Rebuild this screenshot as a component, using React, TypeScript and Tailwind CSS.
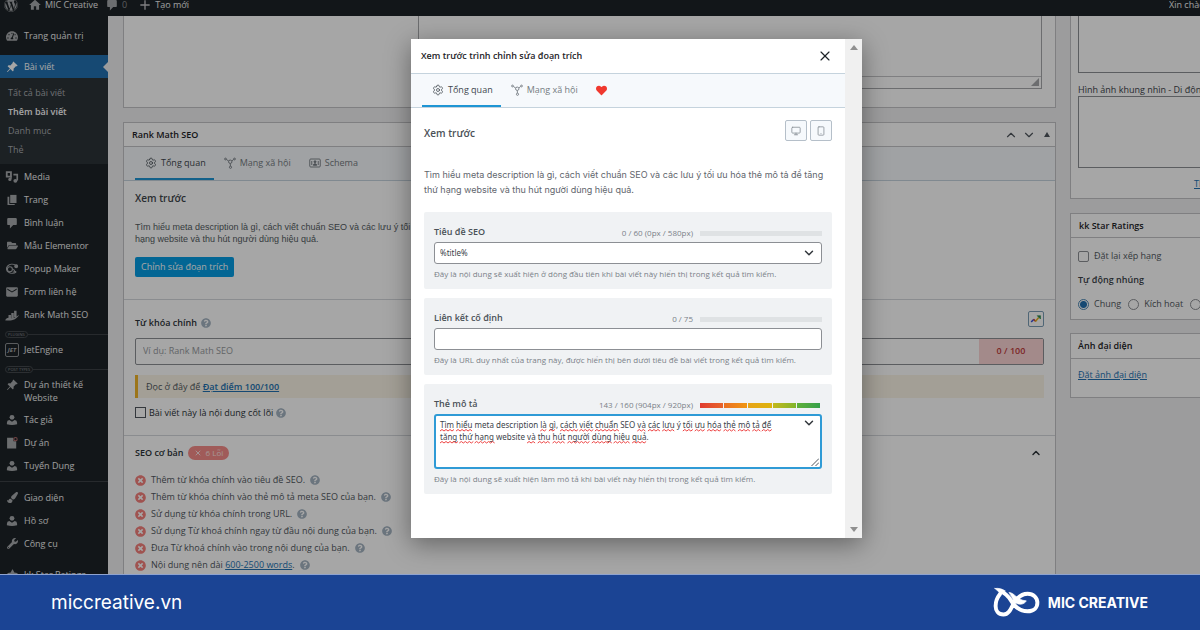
import React, { useMemo, useState } from "react";
import { ChevronDown, ChevronUp, Monitor, Settings, Smartphone, X } from "lucide-react";
import {
  FaFolderOpen,
  FaHeart,
  FaPaintBrush,
  FaQuestionCircle,
  FaStar,
  FaTachometerAlt,
  FaTimesCircle,
  FaWordpress,
  FaWrench,
} from "react-icons/fa";
import { BsPinAngleFill } from "react-icons/bs";
import { MdAdd, MdEmail, MdHome } from "react-icons/md";

type IconProps = { className?: string };

function MediaIcon({ className }: IconProps) {
  return (
    <svg viewBox="0 0 20 20" fill="none" stroke="currentColor" className={className} aria-hidden="true">
      <path d="M2.500 3h6v6.500h-6z" strokeWidth="2.600" />
      <path d="M8.500 9v4" strokeWidth="2" />
      <circle cx="7" cy="13.500" r="2.300" fill="currentColor" stroke="none" />
      <path d="M12 6.500h5.500V15" strokeWidth="2.400" />
      <circle cx="14.800" cy="15.500" r="2.800" fill="currentColor" stroke="none" />
    </svg>
  );
}

function PagesIcon({ className }: IconProps) {
  return (
    <svg viewBox="0 0 20 20" fill="currentColor" className={className} aria-hidden="true">
      <path d="M7 1.500h10.500V15H7z" />
      <path d="M2.500 4.500h3v12h9v2h-12z" />
    </svg>
  );
}

function CommentIcon({ className }: IconProps) {
  return (
    <svg viewBox="0 0 20 20" fill="currentColor" className={className} aria-hidden="true">
      <path d="M4 1.500h12q2 0 2 2v8q0 2-2 2h-4L6.500 19v-5.500H4q-2 0-2-2v-8q0-2 2-2z" />
    </svg>
  );
}

function PersonIcon({ className }: IconProps) {
  return (
    <svg viewBox="0 0 20 20" fill="currentColor" className={className} aria-hidden="true">
      <circle cx="10" cy="5.500" r="4" />
      <path d="M1.500 17v-2.500q0-4 4-4.500l4.500 3 4.500-3q4 .5 4 4.500V17q-8.500 2.500-17 0z" />
    </svg>
  );
}

function PopupIcon({ className }: IconProps) {
  return (
    <svg viewBox="0 0 20 20" fill="none" stroke="currentColor" strokeWidth="1.500" className={className} aria-hidden="true">
      <path d="M16 14a8 6.500 0 1 1-1-9.500" />
      <circle cx="7" cy="10.500" r="3.600" />
      <circle cx="16" cy="6" r="2" fill="currentColor" />
      <path d="M12 10l3 5M11 14.500l5-1" />
    </svg>
  );
}

function RankMathIcon({ className }: IconProps) {
  return (
    <svg viewBox="0 0 20 20" fill="currentColor" className={className} aria-hidden="true">
      <path d="M5 10h3.500v6H5zM9 7h3.500v8H9zM13 4h3.500v9H13z" />
      <path d="M0 17.500c2-3 4-4 6-3.500 5 1.500 9-.5 14-4.500-3 7-11 9.500-20 8z" />
    </svg>
  );
}

function ProjectIcon({ className }: IconProps) {
  return (
    <svg viewBox="0 0 20 20" className={className} aria-hidden="true">
      <path fill="currentColor" d="M3 2.500h9v5h4V18H3z" />
      <circle cx="15" cy="4.500" r="2.400" fill="none" stroke="#b0686a" strokeWidth="1.500" />
    </svg>
  );
}

function SocialIcon({ className }: IconProps) {
  return (
    <svg viewBox="0 0 24 24" fill="none" stroke="currentColor" strokeWidth="1.800" className={className} aria-hidden="true">
      <circle cx="3" cy="4" r="1.800" />
      <circle cx="21" cy="4" r="1.800" />
      <circle cx="12.500" cy="9.500" r="3.400" />
      <circle cx="13" cy="20.500" r="2.200" />
      <path d="M4.800 5l4.600 3M15.500 8l3.700-3M12.700 13v5.200" />
    </svg>
  );
}

function SchemaIcon({ className }: IconProps) {
  return (
    <svg viewBox="0 0 24 20" fill="none" stroke="currentColor" strokeWidth="1.800" className={className} aria-hidden="true">
      <rect x="1.500" y="2" width="21" height="16" rx="2" />
      <path d="M5.500 6v8M18.500 6v8" />
      <circle cx="12" cy="7.500" r="2" fill="currentColor" />
      <path d="M8.500 14.500c0-4 7-4 7 0z" fill="currentColor" />
    </svg>
  );
}

function TrendIcon({ className }: IconProps) {
  return (
    <svg viewBox="0 0 20 20" fill="none" strokeWidth="2.600" className={className} aria-hidden="true">
      <path d="M2 15l4.500-4.500" stroke="#3b4fd8" />
      <path d="M6 10.500l3.500 3.500" stroke="#d9453c" />
      <path d="M9 14l5.500-6.500" stroke="#e6b422" />
      <path d="M12 4.500h5.500V10z" fill="#2b8a4b" stroke="#2b8a4b" strokeWidth="1" />
    </svg>
  );
}

function BrandMark() {
  return (
    <svg viewBox="100 80 144 94" className="h-[31px] w-[47px]" fill="none" stroke="#fff" strokeLinecap="round" strokeLinejoin="round" aria-hidden="true">
      <path
        strokeWidth="12"
        d="M124 94C138 98 148 110 156 122C168 142 184 154 206 154C226 154 236 142 236 128C236 112 224 100 206 100C186 100 174 112 164 128C154 148 148 164 132 164C116 164 108 152 108 138C108 122 113 112 121 102"
      />
      <path strokeWidth="2" fill="#fff" d="M106 84C118 82 130 86 138 92L122 100C118 96 114 90 106 84z" />
      <path strokeWidth="2" fill="#fff" d="M150 96C168 98 172 120 202 122C196 134 178 136 166 126z" />
    </svg>
  );
}

function Help() {
  return <FaQuestionCircle className="size-2.5 shrink-0 text-[#a5b4c2]" aria-label="Trợ giúp" />;
}

type MenuItem = { label: string; icon: React.ReactNode };

const contentMenu: MenuItem[] = [
  { label: "Media", icon: <MediaIcon className="size-3.5" /> },
  { label: "Trang", icon: <PagesIcon className="size-3" /> },
  { label: "Bình luận", icon: <CommentIcon className="size-3" /> },
  { label: "Mẫu Elementor", icon: <FaFolderOpen className="size-[11px]" /> },
  { label: "Popup Maker", icon: <PopupIcon className="size-3.5" /> },
  { label: "Form liên hệ", icon: <MdEmail className="size-3.5" /> },
  { label: "Rank Math SEO", icon: <RankMathIcon className="size-3.5" /> },
];

const jetMenu: MenuItem[] = [
  {
    label: "JetEngine",
    icon: (
      <span className="grid size-3.5 place-items-center rounded-xs border border-[#8b8e91]">
        <span className="text-[6px] leading-none font-bold italic">JET</span>
      </span>
    ),
  },
];

const postTypeMenu: MenuItem[] = [
  { label: "Tác giả", icon: <PersonIcon className="size-3" /> },
  { label: "Dự án", icon: <ProjectIcon className="size-3.5" /> },
  { label: "Tuyển Dụng", icon: <PersonIcon className="size-3" /> },
];

const toolsMenu: MenuItem[] = [
  { label: "Giao diện", icon: <FaPaintBrush className="size-[11px]" /> },
  { label: "Hồ sơ", icon: <PersonIcon className="size-3" /> },
  { label: "Công cụ", icon: <FaWrench className="size-[11px]" /> },
];

function MenuLink({ item }: { item: MenuItem }) {
  return (
    <a href="#" className="flex min-h-[23px] items-center gap-[5px] pl-[5px] text-[#f0f0f1]">
      <span className="grid w-3.5 shrink-0 place-items-center text-[#a7aaad]">{item.icon}</span>
      <span className="leading-[13px]">{item.label}</span>
    </a>
  );
}

function MenuSeparator({ label }: { label: string }) {
  return (
    <div className="flex h-3 items-center pt-1 pl-[5px]">
      <span className="rounded-full border border-[#44494d] px-0.5 text-[4px] leading-[5px] text-[#8a9096] uppercase">{label}</span>
      <span className="h-px flex-1 bg-[#3c4146]" />
    </div>
  );
}

function Sidebar() {
  return (
    <nav aria-label="Menu quản trị" className="w-[108px] shrink-0 overflow-hidden bg-[#1d2327] pt-2 text-[9px]">
      <MenuLink item={{ label: "Trang quản trị", icon: <FaTachometerAlt className="size-3" /> }} />
      <a href="#" className="mt-2 flex h-[23px] items-center gap-[5px] bg-[#2271b1] pl-[5px] text-white">
        <span className="grid w-3.5 shrink-0 place-items-center">
          <BsPinAngleFill className="size-3" />
        </span>
        <span className="flex-1">Bài viết</span>
        <svg viewBox="0 0 5 10" className="h-2.5 w-[5px]" aria-hidden="true">
          <path d="M5 0L0 5l5 5z" fill="#f0f0f1" />
        </svg>
      </a>
      <ul className="mb-px bg-[#2c3338] py-[5px] pl-2 leading-[19px] text-[#a9acb0]">
        <li><a href="#">Tất cả bài viết</a></li>
        <li><a href="#" className="font-semibold text-white">Thêm bài viết</a></li>
        <li><a href="#">Danh mục</a></li>
        <li><a href="#">Thẻ</a></li>
      </ul>
      {contentMenu.map((m) => <MenuLink key={m.label} item={m} />)}
      <MenuSeparator label="Plugins" />
      {jetMenu.map((m) => <MenuLink key={m.label} item={m} />)}
      <MenuSeparator label="Post types" />
      <div className="pt-[5px] pb-1">
        <MenuLink item={{ label: "Dự án thiết kế Website", icon: <BsPinAngleFill className="mb-3 size-3" /> }} />
      </div>
      {postTypeMenu.map((m) => <MenuLink key={m.label} item={m} />)}
      <div className="my-1 h-px bg-[#3c4146]" />
      {toolsMenu.map((m) => <MenuLink key={m.label} item={m} />)}
      <div className="pt-2">
        <MenuLink item={{ label: "kk Star Ratings", icon: <FaStar className="size-[11px]" /> }} />
      </div>
    </nav>
  );
}

function AdminBar() {
  return (
    <header className="flex h-4 shrink-0 items-center bg-[#1d2327] pb-1.5 text-[9px] leading-[10px] whitespace-nowrap text-[#f0f0f1]">
      <FaWordpress className="ml-1 size-3.5 shrink-0 text-[#a7aaad]" />
      <MdHome className="ml-2.5 size-3.5 shrink-0 text-[#a7aaad]" />
      <a href="#" className="ml-[3px] shrink-0">MIC Creative</a>
      <CommentIcon className="ml-2 size-3 shrink-0 text-[#a7aaad]" />
      <span className="ml-1 text-[#8b8e91]">0</span>
      <MdAdd className="ml-2.5 size-4 shrink-0 text-[#c3c4c7]" />
      <a href="#" className="ml-0.5 shrink-0">Tạo mới</a>
      <span className="ml-auto w-[31px] overflow-hidden">Xin chào, admin</span>
    </header>
  );
}

type Tab = { label: string; icon: React.ReactNode };

function TabBar({ tabs, trailing }: { tabs: Tab[]; trailing?: React.ReactNode }) {
  return (
    <div role="tablist" className="flex h-[34px] items-stretch border-b border-[#c5d3dd] bg-[#f6f9fc] pl-[11px] text-[9px]">
      {tabs.map((t, i) => (
        <button
          key={t.label}
          type="button"
          role="tab"
          aria-selected={i === 0}
          className={
            i === 0
              ? "flex items-center gap-1 border-b-2 border-[#1e95d4] pt-px pr-2 pl-2.5 text-[#3f474d]"
              : "flex items-center gap-1 border-b-2 border-transparent pt-px pr-2 pl-2.5 text-[#757c82]"
          }
        >
          {t.icon}
          {t.label}
        </button>
      ))}
      {trailing}
    </div>
  );
}

const generalTab: Tab = { label: "Tổng quan", icon: <Settings className="size-3" strokeWidth={1.5} /> };
const socialTab: Tab = { label: "Mạng xã hội", icon: <SocialIcon className="size-3" /> };
const schemaTab: Tab = { label: "Schema", icon: <SchemaIcon className="h-2.5 w-3" /> };

const seoErrors: React.ReactNode[] = [
  "Thêm từ khóa chính vào tiêu đề SEO.",
  "Thêm từ khóa chính vào thẻ mô tả meta SEO của bạn.",
  "Sử dụng từ khóa chính trong URL.",
  "Sử dụng Từ khoá chính ngay từ đầu nội dung của bạn.",
  "Đưa Từ khoá chính vào trong nội dung của bạn.",
  <>Nội dung nên dài <a href="#" className="text-[#2271b1] underline">600-2500 words</a>.</>,
];

function ExcerptPanel() {
  return (
    <section className="flex h-[92px] shrink-0 justify-end border border-t-0 border-[#c3c4c7] bg-white pr-[13px]">
      <div className="flex h-[73px] w-[68%] flex-col border border-t-0 border-[#a6a8ab]">
        <div className="flex-1" />
        <div className="flex h-3 items-end justify-end border-t border-[#c3c4c7] p-0.5">
          <svg viewBox="0 0 8 8" className="size-2" aria-hidden="true">
            <path d="M8 0v8H0z" fill="#a6a8ab" />
          </svg>
        </div>
      </div>
    </section>
  );
}

function RankMathPanel() {
  return (
    <section className="border border-[#c3c4c7] bg-white text-[9px] text-[#50575e]">
      <div className="flex h-6 items-center gap-1 border-b border-[#c3c4c7] pr-[5px] pl-2">
        <h2 className="flex-1 text-[9px] font-semibold text-[#1d2327]">Rank Math SEO</h2>
        <button type="button" aria-label="Di chuyển lên"><ChevronUp className="size-3.5 text-[#50575e]" /></button>
        <button type="button" aria-label="Di chuyển xuống"><ChevronDown className="size-3.5 text-[#50575e]" /></button>
        <button type="button" aria-label="Thu gọn" className="pl-1">
          <svg viewBox="0 0 6 5" className="h-[5px] w-1.5" aria-hidden="true"><path d="M3 0l3 5H0z" fill="#50575e" /></svg>
        </button>
      </div>
      <TabBar tabs={[generalTab, socialTab, schemaTab]} />
      <div className="border-b border-[#d5d8dc] px-[11px] pt-2.5 pb-[22px]">
        <h3 className="text-[10px] leading-[14px] font-semibold text-[#3f474d]">Xem trước</h3>
        <p className="mt-4 font-['Liberation_Sans',sans-serif] text-[9px] leading-3 text-[#545b61]">
          Tìm hiểu meta description là gì, cách viết chuẩn SEO và các lưu ý tối ưu hóa thẻ mô tả để tăng thứ<br />
          hạng website và thu hút người dùng hiệu quả.
        </p>
        <button type="button" className="mt-3 block h-5 rounded-xs bg-[#069de3] px-1.5 text-white">Chỉnh sửa đoạn trích</button>
      </div>
      <div className="border-b border-[#d5d8dc] px-[11px] pt-2 pb-4">
        <div className="flex items-center justify-between">
          <label htmlFor="focus-keyword" className="flex items-center gap-1 pt-2 font-semibold text-[#2c3338]">
            Từ khóa chính <Help />
          </label>
          <button type="button" aria-label="Xu hướng" className="grid size-4 place-items-center rounded-xs border border-[#7c9db5]">
            <TrendIcon className="size-3" />
          </button>
        </div>
        <div className="mt-2 flex h-[27px] overflow-hidden rounded-xs border border-[#8c8f94]">
          <input id="focus-keyword" placeholder="Ví dụ: Rank Math SEO" className="min-w-0 flex-1 px-[7px] text-[9px] placeholder:text-[#969a9e]" />
          <span className="grid w-16 place-items-center bg-[#fbd5d5] font-semibold text-[#c03a3a]">0 / 100</span>
        </div>
        <p className="mt-2.5 h-[23px] border-l-[3px] border-[#f0b429] bg-[#fbf5e6] pl-2 leading-[23px]">
          Đọc ở đây để <a href="#" className="font-semibold text-[#2271b1] underline">Đạt điểm 100/100</a>
        </p>
        <label className="mt-[9px] flex items-center gap-[3px] leading-3 font-medium text-[#2c3338]">
          <input type="checkbox" className="size-[11px] appearance-none border border-[#50575e] bg-white" />
          Bài viết này là nội dung cốt lõi <Help />
        </label>
      </div>
      <div className="px-[11px] pt-2.5">
        <div className="flex items-center gap-1">
          <h3 className="font-semibold text-[#2c3338]">SEO cơ bản</h3>
          <span className="flex h-3.5 items-center gap-1 rounded-full bg-[#f68d89] px-1.5 text-[8px] text-[#fde3e3]">
            <X className="size-2" strokeWidth={3} /> 6 Lỗi
          </span>
          <button type="button" aria-label="Thu gọn SEO cơ bản" className="ml-auto pr-0.5"><ChevronUp className="size-3 text-[#2c3338]" strokeWidth={3} /></button>
        </div>
        <ul className="mt-3">
          {seoErrors.map((e, i) => (
            <li key={i} className="flex h-[17px] items-center gap-[5px]">
              <FaTimesCircle className="size-[11px] shrink-0 text-[#f5807c]" />
              <span>{e}</span>
              <Help />
            </li>
          ))}
        </ul>
      </div>
    </section>
  );
}

function SideColumn() {
  return (
    <aside className="w-[130px] shrink-0 overflow-hidden text-[9px] text-[#50575e]">
      <div className="w-[190px]">
        <section className="h-[183px] border border-t-0 border-[#c3c4c7] bg-white pl-[7px]">
          <textarea aria-label="Hình ảnh khung nhìn" className="block h-[57px] w-[170px] resize-none border border-t-0 border-[#8c8f94]" />
          <label htmlFor="mobile-viewport" className="mt-2.5 block leading-[13px] text-[#3c434a]">Hình ảnh khung nhìn - Di động</label>
          <textarea id="mobile-viewport" className="block h-[72px] w-[170px] resize-none border border-[#8c8f94]" />
          <a href="#" className="mt-2.5 ml-[116px] block leading-3 text-[#2271b1] underline">Thêm</a>
        </section>
        <section className="mt-3.5 h-[107px] border border-[#c3c4c7] bg-white">
          <h2 className="flex h-6 items-center border-b border-[#c3c4c7] pl-2 text-[9px] font-semibold text-[#1d2327]">kk Star Ratings</h2>
          <div className="flex flex-col gap-3 pt-3 pl-[7px] leading-3">
            <label className="flex items-center gap-[5px]">
              <input type="checkbox" className="size-[11px] appearance-none rounded-xs border border-[#8c8f94] bg-white" />
              Đặt lại xếp hạng
            </label>
            <h3 className="font-semibold text-[#3c434a]">Tự động nhúng</h3>
            <div className="flex items-center gap-[7px]">
              <label className="flex items-center gap-[5px]">
                <input type="radio" name="embed" defaultChecked className="size-[11px] appearance-none rounded-full border border-[#4d88b5] bg-[radial-gradient(circle,#2271b1_0_3px,white_4px)]" />
                Chung
              </label>
              <label className="flex items-center gap-[5px]">
                <input type="radio" name="embed" className="size-[11px] appearance-none rounded-full border border-[#8c8f94] bg-white" />
                Kích hoạt
              </label>
              <label className="flex items-center gap-[5px]">
                <input type="radio" name="embed" className="size-[11px] appearance-none rounded-full border border-[#8c8f94] bg-white" />
                Tắt
              </label>
            </div>
          </div>
        </section>
        <section className="mt-[13px] h-[65px] border border-[#c3c4c7] bg-white">
          <h2 className="flex h-[25px] items-center border-b border-[#c3c4c7] pl-[7px] text-[9px] font-semibold text-[#1d2327]">Ảnh đại diện</h2>
          <a href="#" className="mt-2.5 ml-[7px] inline-block leading-3 text-[#2271b1] underline">Đặt ảnh đại diện</a>
        </section>
      </div>
    </aside>
  );
}

function LengthMeter({ text, children }: { text: string; children?: React.ReactNode }) {
  return (
    <div className="flex items-center gap-[7px] pt-0.5">
      <span className="text-[8px] leading-[10px] text-[#7a8188]">{text}</span>
      {children ? (
        <span className="flex h-[5px] w-[122px] gap-px pr-0.5">{children}</span>
      ) : (
        <span className="h-[5px] w-[122px] bg-[#dfe2e4]" />
      )}
    </div>
  );
}

type FieldProps = { id: string; label: string; count: string; meter?: React.ReactNode; help: string; children: React.ReactNode };

function Field({ id, label, count, meter, help, children }: FieldProps) {
  return (
    <div className="rounded-xs bg-[#f0f2f4] px-2.5 pt-3.5 pb-[9px]">
      <div className="mb-1 flex h-3 items-center justify-between">
        <label htmlFor={id} className="text-[9px] font-semibold text-[#4a5157]">{label}</label>
        <LengthMeter text={count}>{meter}</LengthMeter>
      </div>
      {children}
      <p className="mt-1 text-[8px] leading-3 text-[#7a8188]">{help}</p>
    </div>
  );
}

const descriptionLines = [
  "Tìm hiểu meta description là gì, cách viết chuẩn SEO và các lưu ý tối ưu hóa thẻ mô tả để",
  "tăng thứ hạng website và thu hút người dùng hiệu quả.",
];
const knownWords = new Set(["meta", "description", "SEO", "ý", "website"]);

function SpellingMarks() {
  const marks = useMemo(() => {
    const ctx = document.createElement("canvas").getContext("2d");
    if (!ctx) return [];
    ctx.font = '8px "Noto Sans"';
    return descriptionLines.flatMap((line, row) => {
      const found: { d: string; key: string }[] = [];
      let offset = 0;
      for (const token of line.split(" ")) {
        const word = token.replace(/[.,]/g, "");
        if (!knownWords.has(word)) {
          const start = ctx.measureText(line.slice(0, offset)).width;
          const width = ctx.measureText(word).width;
          const y = 12 + row * 12;
          let d = `M${start} ${y}`;
          for (let x = 0, up = true; x + 2 <= width + 1; x += 2, up = !up) d += `l2 ${up ? -1.5 : 1.5}`;
          found.push({ d, key: `${row}-${offset}` });
        }
        offset += token.length + 1;
      }
      return found;
    });
  }, []);
  return (
    <svg className="pointer-events-none absolute top-[3px] left-1 h-7 w-[360px]" fill="none" stroke="#ee4444" strokeWidth="1" aria-hidden="true">
      {marks.map((m) => <path key={m.key} d={m.d} />)}
    </svg>
  );
}

function SnippetDialog() {
  const [description, setDescription] = useState(descriptionLines.join(" "));
  return (
    <div role="dialog" aria-label="Xem trước trình chỉnh sửa đoạn trích" className="flex w-[451px] shadow-[0_6px_24px_rgba(0,0,0,0.4)]">
      <div className="min-w-0 flex-1 bg-white">
        <div className="flex h-[35px] items-center justify-between border-b border-[#c5d3dd] pr-3 pl-2.5">
          <h1 className="text-[9px] font-semibold text-[#1d2327]">Xem trước trình chỉnh sửa đoạn trích</h1>
          <button type="button" aria-label="Đóng"><X className="size-4 text-[#1d2327]" strokeWidth={1.75} /></button>
        </div>
        <TabBar
          tabs={[generalTab, socialTab]}
          trailing={
            <button type="button" role="tab" aria-selected="false" aria-label="Yêu thích" className="px-2.5">
              <FaHeart className="size-[11px] text-[#f0382e]" />
            </button>
          }
        />
        <div className="px-[13px] pt-3 pb-11">
          <div className="flex h-[21px] items-center justify-between">
            <h2 className="pt-1.5 text-[10px] font-semibold text-[#4a5157]">Xem trước</h2>
            <div className="flex gap-[3px]">
              <button type="button" aria-label="Máy tính" className="grid h-[21px] w-[22px] place-items-center rounded-xs border border-[#b5bfc9] bg-[#f6f9fc]">
                <Monitor className="size-2.5 text-[#8a9299]" />
              </button>
              <button type="button" aria-label="Di động" className="grid h-[21px] w-[22px] place-items-center rounded-xs border border-[#b5bfc9] bg-[#f6f9fc]">
                <Smartphone className="size-2.5 text-[#8a9299]" />
              </button>
            </div>
          </div>
          <p className="mt-[26px] font-['Inter','Liberation_Sans',sans-serif] text-[9px] leading-[15px] text-[#5f666d]">
            Tìm hiểu meta description là gì, cách viết chuẩn SEO và các lưu ý tối ưu hóa thẻ mô tả để tăng thứ hạng website và thu hút người dùng hiệu quả.
          </p>
          <div className="mt-[15px] flex flex-col gap-[9px]">
            <Field id="seo-title" label="Tiêu đề SEO" count="0 / 60 (0px / 580px)" help="Đây là nội dung sẽ xuất hiện ở dòng đầu tiên khi bài viết này hiển thị trong kết quả tìm kiếm.">
              <div className="flex h-[22px] items-center rounded-[3px] border border-[#8c8f94] bg-white pr-[5px]">
                <input id="seo-title" defaultValue="%title%" className="min-w-0 flex-1 px-[5px] font-['Noto_Sans',sans-serif] text-[8px] text-[#3c434a] outline-none" />
                <button type="button" aria-label="Chèn biến tiêu đề"><ChevronDown className="size-3.5 text-[#32373c]" strokeWidth={2.5} /></button>
              </div>
            </Field>
            <Field id="permalink" label="Liên kết cố định" count="0 / 75" help="Đây là URL duy nhất của trang này, được hiển thị bên dưới tiêu đề bài viết trong kết quả tìm kiếm.">
              <input id="permalink" className="block h-[22px] w-full rounded-[3px] border border-[#8c8f94] bg-white px-[5px] text-[8px]" />
            </Field>
            <Field
              id="meta-description"
              label="Thẻ mô tả"
              count="143 / 160 (904px / 920px)"
              help="Đây là nội dung sẽ xuất hiện làm mô tả khi bài viết này hiển thị trong kết quả tìm kiếm."
              meter={
                <>
                  <span className="flex-1 bg-linear-to-r from-[#e03a2f] to-[#e8642a]" />
                  <span className="flex-1 bg-linear-to-r from-[#ea6f22] to-[#f0960f]" />
                  <span className="flex-1 bg-linear-to-r from-[#e8a317] to-[#dcb40c]" />
                  <span className="flex-1 bg-linear-to-r from-[#c3b81a] to-[#7fb52c]" />
                  <span className="flex-1 bg-linear-to-r from-[#5fb038] to-[#34a04a]" />
                </>
              }
            >
              <div className="relative flex h-[55px] items-start rounded-[3px] border-2 border-[#2f9bd6] bg-white">
                <textarea
                  id="meta-description"
                  spellCheck={false}
                  value={description}
                  onChange={(e) => setDescription(e.target.value)}
                  className="h-full min-w-0 flex-1 resize-none overflow-hidden py-[3px] pr-3 pl-1 font-['Noto_Sans',sans-serif] text-[8px] leading-3 text-[#3c434a] outline-none"
                />
                <button type="button" aria-label="Chèn biến mô tả" className="mr-1"><ChevronDown className="size-3.5 text-[#32373c]" strokeWidth={2.5} /></button>
                <SpellingMarks />
                <svg viewBox="0 0 8 8" className="absolute right-px bottom-px size-2" stroke="#50575e" aria-hidden="true">
                  <path d="M0.500 8L8 0.500M4.500 8L8 4.500" />
                </svg>
              </div>
            </Field>
          </div>
        </div>
      </div>
      <div className="flex w-[17px] flex-col items-center justify-between bg-[#f0f0f0] py-1.5">
        <svg viewBox="0 0 8 5" className="h-[5px] w-2" aria-hidden="true"><path d="M4 0l4 5H0z" fill="#8f8f8f" /></svg>
        <svg viewBox="0 0 8 5" className="h-[5px] w-2" aria-hidden="true"><path d="M4 5L0 0h8z" fill="#8f8f8f" /></svg>
      </div>
    </div>
  );
}

export default function App() {
  return (
    <div className="flex h-screen flex-col overflow-hidden font-['Open_Sans','Noto_Sans',sans-serif]">
      <div className="relative flex min-h-0 flex-1 flex-col overflow-hidden bg-[#f0f0f1]">
        <AdminBar />
        <div className="flex min-h-0 flex-1">
          <Sidebar />
          <main className="flex min-w-0 flex-1 gap-3.5 pl-[15px]">
            <div className="flex min-w-0 flex-1 flex-col gap-3.5">
              <ExcerptPanel />
              <RankMathPanel />
            </div>
            <SideColumn />
          </main>
        </div>
        <div className="absolute inset-0 flex items-start justify-center bg-black/35 pt-[39px] pl-[73px]">
          <SnippetDialog />
        </div>
      </div>
      <footer className="flex h-14 shrink-0 items-center justify-between border-t border-[#8fa3cf] bg-[#1b4494] pr-[52px] pl-[51px] text-white">
        <a href="#" className="font-['Inter',sans-serif] text-[19px] leading-6">miccreative.vn</a>
        <div className="flex items-center gap-2">
          <BrandMark />
          <span className="font-['Inter',sans-serif] text-sm font-bold">MIC CREATIVE</span>
        </div>
      </footer>
    </div>
  );
}
